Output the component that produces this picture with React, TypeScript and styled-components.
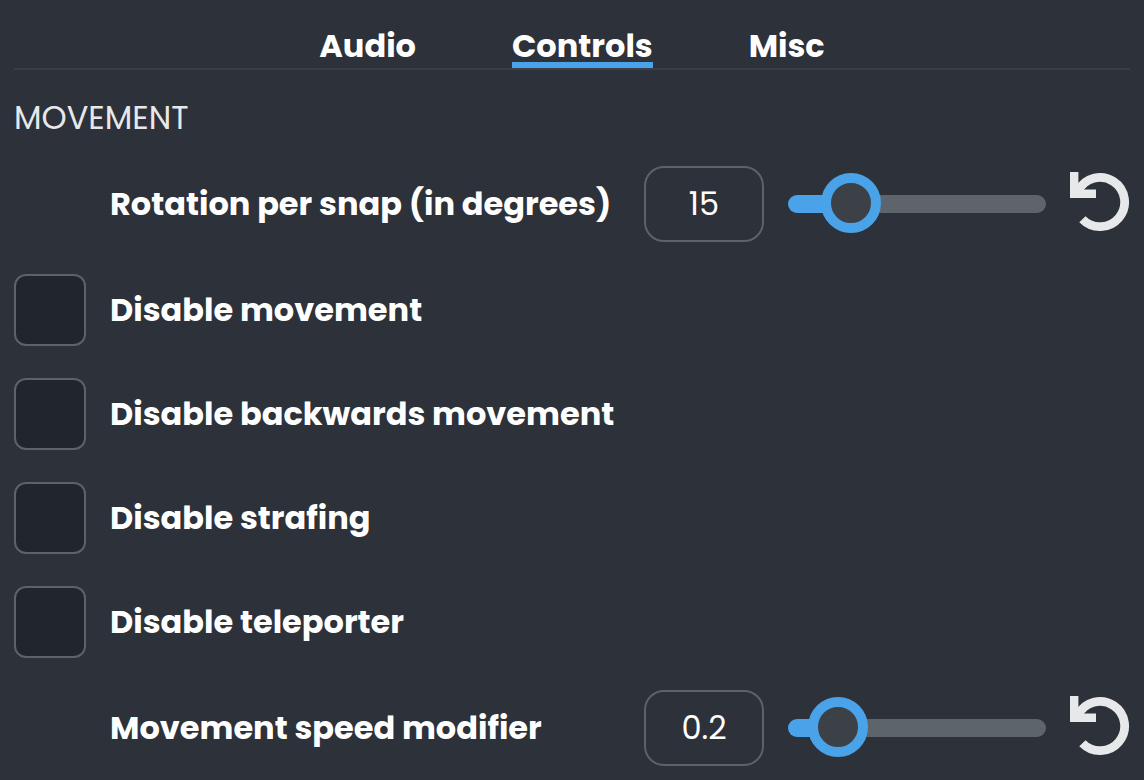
import React, { useState } from 'react';
import styled, { createGlobalStyle } from 'styled-components';

const color = {
  page: '#2d3139',
  field: '#21252d',
  line: '#3a3f47',
  border: '#5d6168',
  track: '#5d646c',
  knob: '#3c4147',
  accent: '#4aa3e8',
  text: '#ffffff',
  muted: '#e7e8ea',
};

const GlobalStyle = createGlobalStyle`
  *, *::before, *::after { box-sizing: border-box; }
  body {
    margin: 0;
    background: ${color.page};
    color: ${color.text};
    font-family: Poppins, Inter, "Liberation Sans", sans-serif;
    font-size: 32px;
    line-height: 48px;
  }
`;

const Panel = styled.main`
  padding: 30px 14px 14px;
`;

const Tabs = styled.nav`
  display: flex;
  justify-content: center;
  gap: 96px;
  border-bottom: 2px solid ${color.line};
`;

const Tab = styled.button<{ $active: boolean }>`
  padding: 0;
  border: 0;
  border-bottom: 6px solid ${(p) => (p.$active ? color.accent : 'transparent')};
  background: none;
  color: inherit;
  font: inherit;
  font-weight: 700;
  line-height: 32px;
  cursor: pointer;
`;

const SectionTitle = styled.h2`
  margin: 24px 0;
  color: ${color.muted};
  font-size: 32px;
  font-weight: 400;
`;

const Settings = styled.div`
  display: flex;
  flex-direction: column;
  gap: 32px;
`;

const Row = styled.div<{ $indent?: boolean }>`
  display: flex;
  align-items: center;
  gap: 24px;
  padding-left: ${(p) => (p.$indent ? 96 : 0)}px;
`;

const Label = styled.label`
  flex: 1;
  font-weight: 700;
  white-space: nowrap;
`;

const Checkbox = styled.input`
  appearance: none;
  width: 72px;
  height: 72px;
  margin: 0;
  border: 2px solid ${color.border};
  border-radius: 12px;
  background: ${color.field};
  cursor: pointer;

  &:checked { background: ${color.accent}; }
`;

const NumberField = styled.input`
  width: 120px;
  height: 76px;
  padding: 0;
  border: 2px solid ${color.border};
  border-radius: 20px;
  background: transparent;
  color: inherit;
  font: inherit;
  text-align: center;
`;

const Slider = styled.input<{ $ratio: number }>`
  appearance: none;
  width: 258px;
  height: 60px;
  margin: 0;
  background: transparent;
  cursor: pointer;

  &::-webkit-slider-runnable-track {
    height: 18px;
    border-radius: 9px;
    background: linear-gradient(
      to right,
      ${color.accent} calc(30px + (100% - 60px) * ${(p) => p.$ratio}),
      ${color.track} 0
    );
  }

  &::-webkit-slider-thumb {
    appearance: none;
    width: 60px;
    height: 60px;
    margin-top: -22px;
    border: 10px solid ${color.accent};
    border-radius: 50%;
    background: ${color.knob};
  }
`;

const ResetButton = styled.button`
  display: flex;
  padding: 0;
  border: 0;
  background: none;
  color: ${color.muted};
  cursor: pointer;
`;

function ResetIcon() {
  return (
    <svg width="60" height="64" viewBox="0 0 60 64" fill="none" aria-hidden="true">
      <path d="M0 0H8.4V17.6H26V26H0Z" fill="currentColor" />
      <path d="M8.1 18.9A24.6 24.6 0 1 1 12.4 47.2" stroke="currentColor" strokeWidth="8.8" />
    </svg>
  );
}

type RangeProps = { id: string; label: string; initial: number; max: number; step: number };

function RangeSetting({ id, label, initial, max, step }: RangeProps) {
  const [value, setValue] = useState(initial);
  const update = (e: React.ChangeEvent<HTMLInputElement>) => setValue(Number(e.target.value));
  return (
    <Row $indent>
      <Label htmlFor={id}>{label}</Label>
      <NumberField id={id} type="text" inputMode="decimal" value={value} onChange={update} />
      <Slider
        type="range"
        aria-label={label}
        min={0}
        max={max}
        step={step}
        value={value}
        $ratio={value / max}
        onChange={update}
      />
      <ResetButton type="button" aria-label={`Reset ${label}`} onClick={() => setValue(initial)}>
        <ResetIcon />
      </ResetButton>
    </Row>
  );
}

function CheckSetting({ id, label }: { id: string; label: string }) {
  return (
    <Row>
      <Checkbox type="checkbox" id={id} />
      <Label htmlFor={id}>{label}</Label>
    </Row>
  );
}

const tabs = ['Audio', 'Controls', 'Misc'];

export default function App() {
  const [active, setActive] = useState('Controls');
  return (
    <Panel>
      <GlobalStyle />
      <Tabs>
        {tabs.map((tab) => (
          <Tab key={tab} type="button" $active={tab === active} onClick={() => setActive(tab)}>
            {tab}
          </Tab>
        ))}
      </Tabs>
      <SectionTitle>MOVEMENT</SectionTitle>
      <Settings>
        <RangeSetting id="rotation" label="Rotation per snap (in degrees)" initial={15} max={90} step={1} />
        <CheckSetting id="movement" label="Disable movement" />
        <CheckSetting id="backwards" label="Disable backwards movement" />
        <CheckSetting id="strafing" label="Disable strafing" />
        <CheckSetting id="teleporter" label="Disable teleporter" />
        <RangeSetting id="speed" label="Movement speed modifier" initial={0.2} max={2} step={0.1} />
      </Settings>
    </Panel>
  );
}
